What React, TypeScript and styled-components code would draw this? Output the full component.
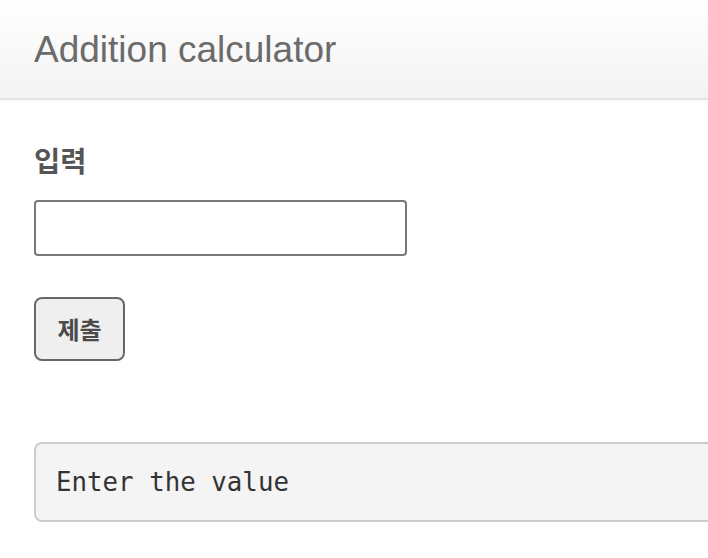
import React from "react";
import styled, { createGlobalStyle } from "styled-components";

const Global = createGlobalStyle`
  html, body { margin: 0; padding: 0; background: #fff; overflow: hidden; }
  body { font-family: "Liberation Sans", Arial, "Noto Sans CJK KR", sans-serif; }
  * { box-sizing: border-box; }
`;

const Header = styled.header`
  height: 100px;
  background: linear-gradient(to bottom, #ffffff 0%, #f3f3f3 100%);
  border-bottom: 2px solid #e4e4e4;
  box-shadow: 0 2px 4px rgba(0, 0, 0, 0.03);
  display: flex;
  align-items: center;
  padding: 2px 0 0 34px;
`;

const Title = styled.h2`
  margin: 0;
  font-family: "Liberation Sans", Arial, sans-serif;
  font-weight: 400;
  font-size: 37px;
  color: #6b6b6b;
`;

const Main = styled.main`
  padding: 0 0 0 34px;
  display: flex;
  flex-direction: column;
  align-items: flex-start;
`;

const Label = styled.label`
  margin-top: 42px;
  font-family: "Noto Sans CJK KR", sans-serif;
  font-weight: 700;
  font-size: 28.5px;
  line-height: 36px;
  color: #555;
`;

const TextInput = styled.input`
  margin-top: 22px;
  width: 373px;
  height: 56px;
  border: 2px solid #777;
  border-radius: 4px;
  background: #fff;
  outline: none;
  padding: 0 12px;
  font-size: 24px;
`;

const SubmitButton = styled.button`
  margin-top: 41px;
  width: 91px;
  height: 64px;
  border: 2px solid #676767;
  border-radius: 8px;
  background: #efefef;
  font-family: "Noto Sans CJK KR", sans-serif;
  font-weight: 700;
  font-size: 24px;
  color: #4a4a4a;
  padding: 0 0 2px;
`;

const Output = styled.pre`
  margin: 81px 0 0;
  width: 700px;
  height: 80px;
  background: #f4f4f4;
  border: 2px solid #cccccc;
  border-radius: 8px;
  padding: 0 20px;
  display: flex;
  align-items: center;
  font-family: "DejaVu Sans Mono", monospace;
  font-size: 25.8px;
  color: #333;
`;

export default function App() {
  return (
    <>
      <Global />
      <Header>
        <Title>Addition calculator</Title>
      </Header>
      <Main>
        <Label htmlFor="num">입력</Label>
        <TextInput id="num" type="text" />
        <SubmitButton type="button">제출</SubmitButton>
        <Output>Enter the value</Output>
      </Main>
    </>
  );
}
